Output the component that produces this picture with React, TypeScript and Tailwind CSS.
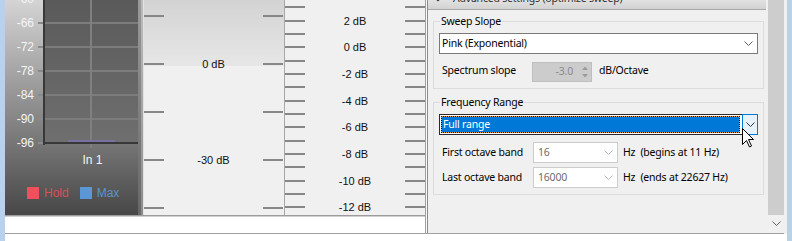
import React from "react";

const meterLabels = ["-60", "-66", "-72", "-78", "-84", "-90", "-96"];
const panel1Labels = ["", "0 dB", "", "-30 dB", ""];
const panel2Labels = ["", "2 dB", "", "0 dB", "", "-2 dB", "", "-4 dB", "", "-6 dB", "", "-8 dB", "", "-10 dB", "", "-12 dB"];

function Chevron({ color = "#606060" }: { color?: string }) {
  return (
    <svg width="9" height="5" viewBox="0 0 9 5">
      <path d="M0.5 0.5 L4.5 4.5 L8.5 0.5" fill="none" stroke={color} strokeWidth="1" />
    </svg>
  );
}

function Tick() {
  return <div className="h-[2px] w-[20px] bg-[#878787]" />;
}

function Meter() {
  const grid = [23, 47, 71, 95, 119];
  return (
    <div className="flex w-[138px]">
      <div className="flex w-[133px] flex-col bg-[linear-gradient(to_bottom,#d4d4d4,#474747)] font-['Liberation_Sans',sans-serif] text-[12px]">
        <div className="flex h-[149px]">
          <div className="w-[33px] overflow-hidden">
            <div className="-mt-[13px] flex flex-col">
              {meterLabels.map((l) => (
                <div key={l} className="flex h-[24px] items-center justify-end pr-[4px] text-[#f5f5f5]">
                  {l}
                </div>
              ))}
            </div>
          </div>
          <svg width="100" height="149" viewBox="0 0 100 149">
            <defs>
              <linearGradient id="plot" x1="0" y1="0" x2="0" y2="1">
                <stop offset="0" stopColor="#5a5a5a" />
                <stop offset="1" stopColor="#6f6f6f" />
              </linearGradient>
            </defs>
            <rect x="5" y="0" width="95" height="144" fill="url(#plot)" />
            {grid.map((y) => (
              <g key={y}>
                <rect x="5" y={y - 1} width="95" height="2" fill="#7c7c7c" />
                <rect x="0" y={y - 1} width="5" height="2" fill="#8a8a8a" />
              </g>
            ))}
            <rect x="52" y="0" width="2" height="148" fill="#808080" />
            <rect x="0" y="142" width="5" height="2" fill="#8a8a8a" />
            <rect x="30" y="140" width="47" height="2" fill="#7a70a0" />
            <rect x="5" y="0" width="2" height="145" fill="#383838" />
            <rect x="5" y="142" width="95" height="2" fill="#383838" />
          </svg>
        </div>
        <div className="flex h-[20px] items-center pl-[42px] pt-[1px]">
          <span className="w-[91px] text-center text-[#f5f5f5]">In 1</span>
        </div>
        <div className="mt-[16px] flex h-[16px] items-center pl-[22px]">
          <div className="h-[12px] w-[12px] bg-[#f04f5c]" />
          <span className="ml-[5px] text-[#dc4e5a]">Hold</span>
          <div className="ml-[11px] h-[12px] w-[12px] bg-[#5b97d4]" />
          <span className="ml-[5px] text-[#5b93cf]">Max</span>
        </div>
      </div>
      <div className="w-[3px] bg-[linear-gradient(to_bottom,#9a9a9a,#686868)]" />
      <div className="w-[2px] bg-[linear-gradient(to_bottom,#bdbdbd,#8c8c8c)]" />
    </div>
  );
}

function ScalePanel1() {
  return (
    <div className="w-[141px] overflow-hidden border-r border-[#a8a8a8] bg-[linear-gradient(to_bottom,#d3d3d3_0px,#e7e7e7_66px,#f0f0f0_66px)] pt-[15px] font-['Liberation_Sans',sans-serif] text-[11px] text-[#111]">
      {panel1Labels.map((label, i) => (
        <div key={i} className="h-[48px]">
          <div className="flex h-[2px] items-center justify-between pr-[1px]">
            <Tick />
            <span className="leading-[13px]">{label}</span>
            <Tick />
          </div>
        </div>
      ))}
    </div>
  );
}

function ScalePanel2() {
  return (
    <div className="w-[140px] overflow-hidden bg-[#f0f0f0] pt-[6px] font-['Liberation_Sans',sans-serif] text-[11px] text-[#111]">
      {panel2Labels.map((label, i) => (
        <div key={i} className={i % 3 === 0 ? "h-[14px]" : "h-[13px]"}>
          <div className="flex h-[2px] items-center justify-between">
            <Tick />
            <span className="leading-[13px]">{label}</span>
            <Tick />
          </div>
        </div>
      ))}
    </div>
  );
}

function Group({ title, className, children }: { title: string; className: string; children: React.ReactNode }) {
  return (
    <div className={`ml-[5px] w-[331px] border border-[#dcdcdc] ${className}`}>
      <div className="-mt-[8px] ml-[6px] w-fit bg-[#f0f0f0] px-[1px] leading-[15px]">{title}</div>
      {children}
    </div>
  );
}

function DisabledCombo({ value }: { value: string }) {
  return (
    <div className="flex h-[21px] w-[85px] items-center justify-between border border-[#cccccc] bg-white pl-[4px] pr-[4px] text-[#6d6d6d]">
      <span>{value}</span>
      <Chevron color="#b8b8b8" />
    </div>
  );
}

function RightPanel() {
  return (
    <div className="flex w-[343px] border-b border-l border-[#a0a0a0] font-['Noto_Sans',sans-serif] text-[10.5px] tracking-[-0.2px]">
      <div className="flex flex-1 border-l border-[#fafafa]">
        <div className="flex-1 border-l border-[#8c8c8c] bg-[#f0f0f0]">
          <div className="flex h-[10px] w-[338px] items-start overflow-hidden border-b border-[#a9a9a9] bg-[linear-gradient(to_bottom,#e2e2e2,#d2d2d2)]">
            <svg className="-mt-[4px] ml-[5px]" width="10" height="6" viewBox="0 0 10 6">
              <path d="M1 0.5 L5 4.5 L9 0.5" fill="none" stroke="#333" strokeWidth="1.5" />
            </svg>
            <span className="-mt-[9px] ml-[10px] whitespace-nowrap leading-[15px] text-[#333]">
              Advanced settings (optimize sweep)
            </span>
          </div>

          <Group title="Sweep Slope" className="mt-[11px] h-[68px]">
            <div className="ml-[5px] mt-[4px] flex h-[21px] w-[319px] items-center justify-between border border-[#7a7a7a] bg-white pl-[2px] pr-[4px]">
              <span>Pink (Exponential)</span>
              <Chevron />
            </div>
            <div className="mt-[8px] flex h-[20px] items-center">
              <span className="-mt-[3px] ml-[8px] w-[90px]">Spectrum slope</span>
              <div className="flex h-[20px] w-[60px] border border-[#bfbfbf] bg-[#cccccc]">
                <div className="flex flex-1 items-center justify-end pr-[5px] text-[#8a8a8a]">-3.0</div>
                <div className="flex w-[13px] flex-col items-center justify-center gap-[4px]">
                  <svg width="6" height="4" viewBox="0 0 6 4">
                    <path d="M0 4 L3 0.5 L6 4 Z" fill="#9c9c9c" />
                  </svg>
                  <svg width="6" height="4" viewBox="0 0 6 4">
                    <path d="M0 0 L3 3.5 L6 0 Z" fill="#9c9c9c" />
                  </svg>
                </div>
              </div>
              <span className="-mt-[3px] ml-[7px]">dB/Octave</span>
            </div>
          </Group>

          <Group title="Frequency Range" className="mt-[13px] h-[93px]">
            <div className="ml-[5px] mt-[4px] flex h-[21px] w-[319px]">
              <div className="flex-1 border-y border-l border-[#2a2a2a] bg-white py-[1px] pl-[1px] pr-[2px]">
                <div className="h-full border border-dotted border-black bg-[#f2a33a]">
                  <div className="flex h-full items-center bg-[#0078d7] pl-[1px] text-white">Full range</div>
                </div>
              </div>
              <div className="flex w-[16px] items-center justify-center border border-[#0078d7] bg-[#e5f1fb]">
                <Chevron color="#333" />
              </div>
            </div>
            <div className="mt-[7px] flex h-[21px] items-center">
              <span className="ml-[8px] w-[91px]">First octave band</span>
              <DisabledCombo value="16" />
              <span className="ml-[5px] whitespace-pre">Hz  (begins at 11 Hz)</span>
            </div>
            <div className="mt-[4px] flex h-[21px] items-center">
              <span className="ml-[8px] w-[91px]">Last octave band</span>
              <DisabledCombo value="16000" />
              <span className="ml-[5px] whitespace-pre">Hz  (ends at 22627 Hz)</span>
            </div>
          </Group>
        </div>
      </div>
    </div>
  );
}

function Scrollbar() {
  return (
    <div className="flex w-[16px] flex-col">
      <div className="h-[215px] bg-[#cdcdcd]" />
      <div className="flex h-[17px] items-center justify-center bg-[#f0f0f0]">
        <Chevron color="#606060" />
      </div>
      <div className="h-[1px] bg-[#f0f0f0]" />
      <div className="h-[1px] bg-[#a0a0a0]" />
    </div>
  );
}

export default function App() {
  return (
    <div className="relative flex h-[241px] w-[792px] overflow-hidden bg-white font-['Noto_Sans',sans-serif] text-[11px] text-black">
      <div className="w-[5px] shrink-0 bg-[#b9d1ea]" />
      <div className="flex w-[782px] shrink-0 flex-col">
        <div className="flex h-[234px]">
          <div className="flex w-[420px] flex-col">
            <div className="flex h-[215px]">
              <Meter />
              <div className="w-[1px] bg-[#e2e2e2]" />
              <ScalePanel1 />
              <ScalePanel2 />
            </div>
            <div className="h-[1px] bg-[#9c9c9c]" />
            <div className="h-[1px] bg-[#d0d0d0]" />
            <div className="h-[16px] bg-white" />
            <div className="h-[1px] bg-[#a0a0a0]" />
          </div>
          <RightPanel />
          <Scrollbar />
          <div className="w-[3px] bg-[#f0f0f0]" />
        </div>
        <div className="flex-1 bg-white" />
      </div>
      <div className="w-[5px] shrink-0 bg-[#b9d1ea]" />
      <svg className="absolute left-[742px] top-[128px]" width="13" height="20" viewBox="0 0 13 20">
        <path d="M0.5 0.5 V16.5 L4.5 12.5 L7.5 19 L9.5 18 L6.5 11.5 H11.5 Z" fill="white" stroke="black" strokeWidth="1" />
      </svg>
    </div>
  );
}
